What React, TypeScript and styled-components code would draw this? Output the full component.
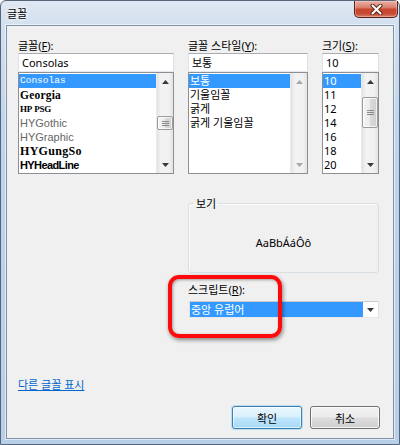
import React from "react";
import styled, { createGlobalStyle, css } from "styled-components";

const UI = `"Noto Sans", "Noto Sans CJK KR", sans-serif`;

const GlobalStyle = createGlobalStyle`
  html, body { margin: 0; padding: 0; background: #ffffff; }
  body { font-family: ${UI}; font-size: 11px; color: #000; }
  * { box-sizing: border-box; }
`;

const Window = styled.div`
  width: 400px;
  height: 445px;
  display: flex;
  flex-direction: column;
  padding: 0 5px 5px 5px;
  border: 1px solid #56657a;
  border-radius: 6px 6px 0 0;
  background: linear-gradient(180deg, #dfe8f3 0px, #d3e0ef 24px, #c0d5ec 120px, #b8cfea 100%);
`;

const TitleBar = styled.div`
  height: 24px;
  margin: 0 -5px;
  padding: 0 1px 0 6px;
  display: flex;
  align-items: flex-start;
`;

const Title = styled.div`
  padding-top: 6px;
  font-family: ${UI};
  font-size: 11px;
  line-height: 14px;
  color: #000;
  text-shadow: 0 0 6px #fff, 0 0 3px #fff;
`;

const CloseButton = styled.div`
  margin-left: auto;
  width: 44px;
  height: 17px;
  border: 1px solid #5a2019;
  border-top: none;
  border-radius: 0 0 5px 5px;
  background: linear-gradient(180deg, #e8b1a6 0%, #d9826f 40%, #c9452f 52%, #c44a33 78%, #da8066 100%);
  box-shadow: inset 0 0 0 1px rgba(255, 230, 220, 0.35);
  display: flex;
  align-items: center;
  justify-content: center;
`;

const Client = styled.div`
  flex: 1;
  display: flex;
  flex-direction: column;
  background: #f0f0f0;
  border: 1px solid #8193aa;
  box-shadow: 0 0 0 1px rgba(255, 255, 255, 0.55);
  padding: 12px 13px 9px 11px;
  font-family: ${UI};
  font-size: 11px;
`;

const Grid = styled.div<{ $top?: number }>`
  display: grid;
  grid-template-columns: 156px 120px 57px;
  column-gap: 14px;
  margin-top: ${(p) => p.$top ?? 0}px;
`;

const Column = styled.div`
  display: flex;
  flex-direction: column;
  min-width: 0;
`;

const Label = styled.div`
  height: 15px;
  line-height: 15px;
  white-space: nowrap;
  color: #000;
`;

const TextBox = styled.div`
  height: 19px;
  background: #fff;
  border: 1px solid;
  border-color: #abadb3 #dbdfe6 #e3e9ef #e2e3ea;
  padding: 0 3px;
  line-height: 17px;
  white-space: nowrap;
  font-size: 11px;
`;

const ListBox = styled.div`
  height: 102px;
  display: flex;
  background: #fff;
  border: 1px solid #8c9096;
`;

const Items = styled.div`
  flex: 1;
  min-width: 0;
  padding-top: 1px;
  display: flex;
  flex-direction: column;
`;

const variantCss = {
  ui: css`
    font-family: ${UI};
    font-size: 11px;
  `,
  consolas: css`
    font-family: "Liberation Mono", monospace;
    font-size: 9.5px;
  `,
  georgia: css`
    font-family: "Liberation Serif", serif;
    font-weight: 700;
    font-size: 11.5px;
    letter-spacing: 0.2px;
  `,
  hppsg: css`
    font-family: "Liberation Serif", serif;
    font-weight: 700;
    font-size: 9px;
    letter-spacing: -0.3px;
    word-spacing: 1px;
  `,
  gothic: css`
    font-family: "Liberation Sans", sans-serif;
    font-size: 11px;
    color: #666;
  `,
  gungso: css`
    font-family: "Liberation Serif", serif;
    font-weight: 700;
    font-size: 12px;
    letter-spacing: 0.3px;
  `,
  headline: css`
    font-family: "Liberation Sans", sans-serif;
    font-weight: 700;
    font-size: 11px;
    letter-spacing: -0.6px;
  `,
};

type Variant = keyof typeof variantCss;

const Item = styled.div<{ $selected?: boolean; $variant: Variant }>`
  height: 14px;
  line-height: 14px;
  padding-left: 1px;
  white-space: pre;
  overflow: hidden;
  color: #000;
  ${(p) => variantCss[p.$variant]}
  ${(p) =>
    p.$selected &&
    css`
      background: #3399ff;
      color: #fff;
    `}
`;

const Bar = styled.div`
  width: 17px;
  display: flex;
  flex-direction: column;
  background: linear-gradient(90deg, #e3e3e3 0%, #f3f3f3 25%, #f1f1f1 75%, #e3e3e3 100%);
  border-left: 1px solid #eaeaea;
`;

const ArrowButton = styled.div`
  height: 17px;
  display: flex;
  align-items: center;
  justify-content: center;
`;

const Track = styled.div`
  flex: 1;
  display: flex;
  flex-direction: column;
`;

const Thumb = styled.div<{ $top: number; $height: number }>`
  margin: ${(p) => p.$top}px 0 0 0;
  height: ${(p) => p.$height}px;
  border: 1px solid #9b9b9b;
  border-radius: 2px;
  background: linear-gradient(90deg, #f4f4f4 0%, #ebebeb 50%, #dadada 51%, #cfcfcf 100%);
  box-shadow: inset 0 0 0 1px rgba(255, 255, 255, 0.7);
  display: flex;
  align-items: center;
  justify-content: center;
`;

const GroupBox = styled.fieldset`
  grid-column: 2 / 4;
  margin: 0;
  padding: 0;
  min-width: 0;
  border: 1px solid #d8dfe4;
  border-radius: 3px;
  box-shadow: inset 1px 1px 0 #fbfbfb;
`;

const Legend = styled.legend`
  margin-left: 5px;
  padding: 0 2px;
  height: 15px;
  line-height: 15px;
`;

const PreviewText = styled.div`
  height: 61px;
  display: flex;
  align-items: center;
  justify-content: center;
  padding-top: 2px;
  font-family: "Noto Sans", sans-serif;
  font-size: 11px;
`;

const ScriptSection = styled.div`
  grid-column: 2 / 4;
  margin-top: 9px;
  position: relative;
  display: flex;
  flex-direction: column;
`;

const Combo = styled.div`
  margin: 4px 0 0 1px;
  width: 190px;
  height: 17px;
  display: flex;
  background: #fff;
  border: 1px solid;
  border-color: #c9cbd0 #dfe2e8 #e6e9ee #e0e2e8;
`;

const ComboValue = styled.div`
  flex: 1;
  background: #3399ff;
  color: #fff;
  line-height: 15px;
  padding-left: 1px;
  white-space: nowrap;
`;

const ComboArrow = styled.div`
  width: 15px;
  display: flex;
  align-items: center;
  justify-content: center;
`;

const Highlight = styled.div`
  position: absolute;
  left: -20px;
  top: -7px;
  width: 114px;
  height: 63px;
  border: 4px solid #ff0a0a;
  border-radius: 11px;
  box-shadow: 1px 2px 4px rgba(0, 0, 0, 0.45), inset 1px 1px 3px rgba(0, 0, 0, 0.35);
  pointer-events: none;
`;

const Spacer = styled.div`
  flex: 1;
`;

const LinkRow = styled.div`
  height: 15px;
  line-height: 15px;
`;

const Link = styled.a`
  color: #0066cc;
  text-decoration: underline;
  cursor: pointer;
`;

const ButtonRow = styled.div`
  margin-top: 14px;
  display: flex;
  justify-content: flex-end;
  gap: 8px;
`;

const Button = styled.button<{ $default?: boolean }>`
  width: 70px;
  height: 23px;
  padding: 0;
  font-family: ${UI};
  font-size: 11px;
  color: #000;
  border-radius: 3px;
  border: 1px solid #707070;
  background: linear-gradient(180deg, #f2f2f2 0%, #ebebeb 48%, #dddddd 52%, #cfcfcf 100%);
  box-shadow: inset 0 0 0 1px rgba(255, 255, 255, 0.75);
  ${(p) =>
    p.$default &&
    css`
      border-color: #3c7fb1;
      background: linear-gradient(180deg, #eaf6fd 0%, #d9f0fc 48%, #bee6fd 52%, #a7d9f5 100%);
      box-shadow: inset 0 0 0 1px rgba(255, 255, 255, 0.6), 0 0 0 1px rgba(80, 190, 240, 0.35);
    `}
`;

function Arrow({ dir, disabled }: { dir: "up" | "down"; disabled?: boolean }) {
  const d = dir === "up" ? "M0 4 L3.5 0 L7 4 Z" : "M0 0 L7 0 L3.5 4 Z";
  return (
    <svg width="7" height="4" viewBox="0 0 7 4">
      <path d={d} fill={disabled ? "#a8a8a8" : "#3a3a3a"} />
    </svg>
  );
}

function Grip() {
  return (
    <svg width="7" height="7" viewBox="0 0 7 7">
      <path d="M0 1.5 H7 M0 3.5 H7 M0 5.5 H7" stroke="#8a8a8a" strokeWidth="1" />
    </svg>
  );
}

function ScrollBar({ thumbTop, thumbHeight, disabled }: { thumbTop?: number; thumbHeight?: number; disabled?: boolean }) {
  return (
    <Bar>
      <ArrowButton>
        <Arrow dir="up" disabled={disabled} />
      </ArrowButton>
      <Track>
        {thumbHeight !== undefined && thumbTop !== undefined ? (
          <Thumb $top={thumbTop} $height={thumbHeight}>
            <Grip />
          </Thumb>
        ) : null}
      </Track>
      <ArrowButton>
        <Arrow dir="down" disabled={disabled} />
      </ArrowButton>
    </Bar>
  );
}

const fonts: { name: string; v: Variant }[] = [
  { name: "Consolas", v: "consolas" },
  { name: "Georgia", v: "georgia" },
  { name: "HP PSG", v: "hppsg" },
  { name: "HYGothic", v: "gothic" },
  { name: "HYGraphic", v: "gothic" },
  { name: "HYGungSo", v: "gungso" },
  { name: "HYHeadLine", v: "headline" },
];

const styles = ["보통", "기울임꼴", "굵게", "굵게 기울임꼴"];
const sizes = ["10", "11", "12", "14", "16", "18", "20"];

export default function App() {
  return (
    <>
      <GlobalStyle />
      <Window>
        <TitleBar>
          <Title>글꼴</Title>
          <CloseButton>
            <svg width="13" height="11" viewBox="0 0 13 11">
              <path d="M2.5 1.5 L10.5 9.5 M10.5 1.5 L2.5 9.5" stroke="#5b2a22" strokeWidth="4" strokeLinecap="round" />
              <path d="M2.5 1.5 L10.5 9.5 M10.5 1.5 L2.5 9.5" stroke="#ffffff" strokeWidth="2" strokeLinecap="round" />
            </svg>
          </CloseButton>
        </TitleBar>
        <Client>
          <Grid>
            <Column>
              <Label>
                글꼴(<u>F</u>):
              </Label>
              <TextBox>Consolas</TextBox>
              <ListBox>
                <Items>
                  {fonts.map((f, i) => (
                    <Item key={f.name} $variant={f.v} $selected={i === 0}>
                      {f.name}
                    </Item>
                  ))}
                </Items>
                <ScrollBar thumbTop={26} thumbHeight={14} />
              </ListBox>
            </Column>
            <Column>
              <Label>
                글꼴 스타일(<u>Y</u>):
              </Label>
              <TextBox>보통</TextBox>
              <ListBox>
                <Items>
                  {styles.map((s, i) => (
                    <Item key={s} $variant="ui" $selected={i === 0}>
                      {s}
                    </Item>
                  ))}
                </Items>
                <ScrollBar disabled />
              </ListBox>
            </Column>
            <Column>
              <Label>
                크기(<u>S</u>):
              </Label>
              <TextBox>10</TextBox>
              <ListBox>
                <Items>
                  {sizes.map((s, i) => (
                    <Item key={s} $variant="ui" $selected={i === 0}>
                      {s}
                    </Item>
                  ))}
                </Items>
                <ScrollBar thumbTop={7} thumbHeight={31} />
              </ListBox>
            </Column>
          </Grid>
          <Grid $top={22}>
            <GroupBox>
              <Legend>보기</Legend>
              <PreviewText>AaBbÁáÔô</PreviewText>
            </GroupBox>
            <ScriptSection>
              <Label>
                스크립트(<u>R</u>):
              </Label>
              <Combo>
                <ComboValue>중앙 유럽어</ComboValue>
                <ComboArrow>
                  <Arrow dir="down" />
                </ComboArrow>
              </Combo>
              <Highlight />
            </ScriptSection>
          </Grid>
          <Spacer />
          <LinkRow>
            <Link>다른 글꼴 표시</Link>
          </LinkRow>
          <ButtonRow>
            <Button $default>확인</Button>
            <Button>취소</Button>
          </ButtonRow>
        </Client>
      </Window>
    </>
  );
}
